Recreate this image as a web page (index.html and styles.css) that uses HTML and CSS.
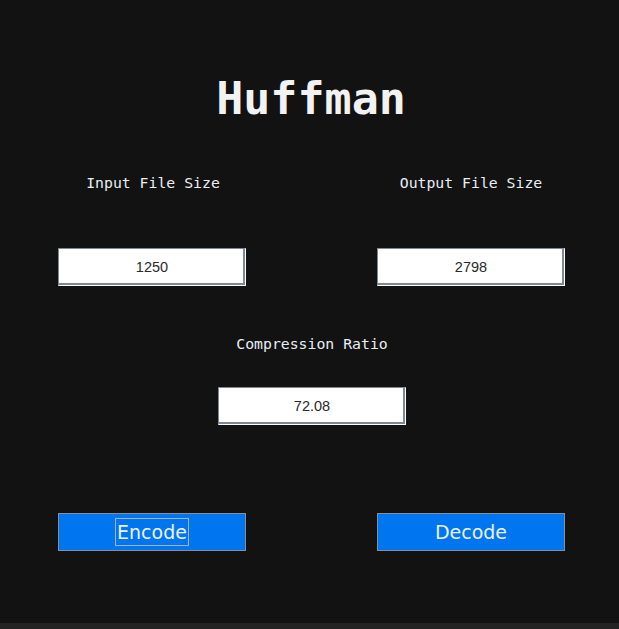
FILE: index.html
```html
<!DOCTYPE html>
<html>
<head>
<meta charset="utf-8">
<link rel="stylesheet" href="styles.css">
</head>
<body>
<main class="app">
  <h1 class="title">Huffman</h1>
  <div class="row labels">
    <div class="cell"><span class="label">Input File Size</span></div>
    <div class="cell"><span class="label">Output File Size</span></div>
  </div>
  <div class="row fields">
    <div class="cell"><div class="field">1250</div></div>
    <div class="cell"><div class="field">2798</div></div>
  </div>
  <div class="center-label"><span class="label">Compression Ratio</span></div>
  <div class="center-field"><div class="field">72.08</div></div>
  <div class="row buttons">
    <div class="cell"><button class="btn"><span class="focus">Encode</span></button></div>
    <div class="cell"><button class="btn"><span class="nofocus">Decode</span></button></div>
  </div>
</main>
<div class="bottom-bar"></div>
</body>
</html>
```
FILE: styles.css
```css
html, body {
  margin: 0;
  padding: 0;
  background: #121212;
}
body {
  height: 629px;
  display: flex;
  flex-direction: column;
  overflow: hidden;
}
.app {
  flex: 1;
  display: flex;
  flex-direction: column;
}
.title {
  margin: 73px 0 0 0;
  height: 52px;
  line-height: 52px;
  text-align: center;
  font-family: "DejaVu Sans Mono", monospace;
  font-weight: bold;
  font-size: 45px;
  color: #f2f2f2;
  padding-left: 3px;
}
.row {
  display: flex;
  justify-content: space-between;
  padding: 0 54px 0 58px;
}
.cell {
  width: 188px;
  display: flex;
  justify-content: center;
}
.label {
  font-family: "DejaVu Sans Mono", monospace;
  font-size: 14.8px;
  color: #e9eef4;
  line-height: 20px;
}
.labels {
  margin-top: 48px;
}
.labels .cell:first-child .label {
  margin-left: 2px;
}
.fields {
  margin-top: 55px;
}
.field {
  box-sizing: border-box;
  width: 188px;
  height: 38px;
  background: #fff;
  border: 1px solid;
  border-color: #7c8893 #ffffff #ffffff #7c8893;
  box-shadow: inset -2px -2px 0 #7c8893;
  font-family: "Liberation Sans", Arial, sans-serif;
  font-size: 14.5px;
  color: #2a2a2a;
  display: flex;
  align-items: center;
  justify-content: center;
}
.center-label {
  margin-top: 48px;
  display: flex;
  justify-content: center;
  padding-left: 5px;
}
.center-field {
  margin-top: 33px;
  display: flex;
  justify-content: center;
  padding-left: 5px;
}
.buttons {
  margin-top: 88px;
}
.btn {
  box-sizing: border-box;
  width: 188px;
  height: 38px;
  margin: 0;
  padding: 0;
  background: #0075f0;
  border: 1px solid #8a8f96;
  color: #eef2f8;
  font-family: "DejaVu Sans", sans-serif;
  font-size: 19px;
  display: flex;
  align-items: center;
  justify-content: center;
}
.focus {
  outline: 1px solid #a9b3bf;
  padding: 0 1px;
  line-height: 26px;
}
.nofocus {
  padding: 0 1px;
  line-height: 26px;
}
.bottom-bar {
  height: 6px;
  background: #232323;
}
```
